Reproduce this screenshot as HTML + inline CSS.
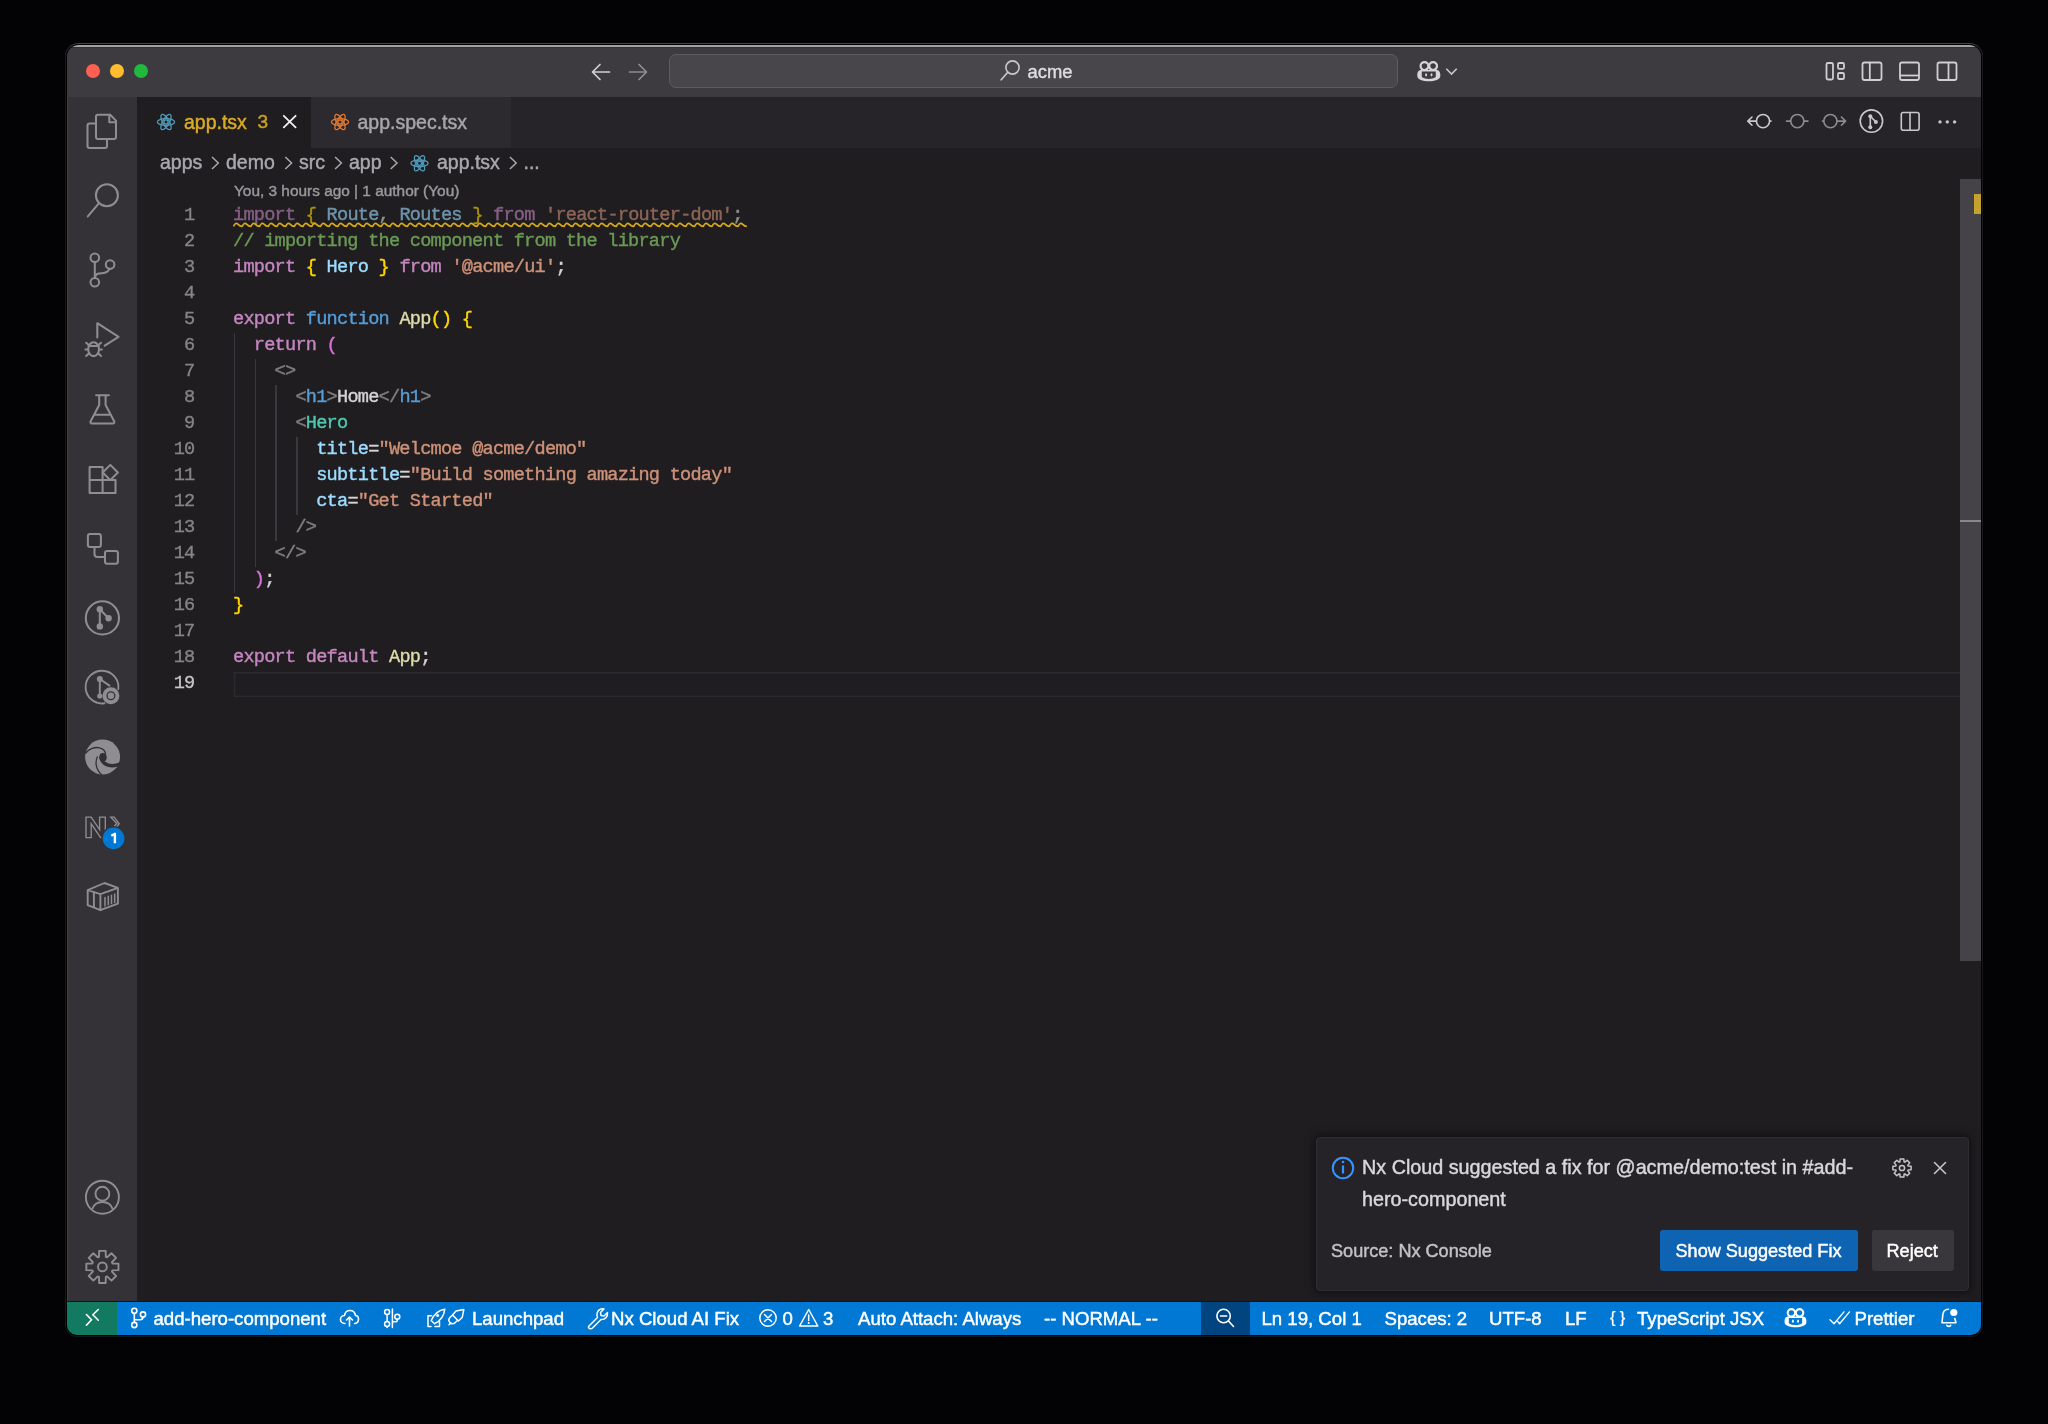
<!DOCTYPE html>
<html><head><meta charset="utf-8">
<style>
*{margin:0;padding:0;box-sizing:border-box}
html,body{width:2048px;height:1424px;overflow:hidden;background:#030205}
body{position:relative;font-family:"Liberation Sans",sans-serif}
.abs{position:absolute}
.t{position:absolute;white-space:pre;-webkit-text-stroke:0.45px currentColor}
#w1{position:absolute;left:65px;top:43px;width:1918px;height:1294px;border-radius:14px 14px 12px 12px;background:#18171a;border-top:1px solid #464448}
#w2{position:absolute;left:66px;top:44px;width:1916px;height:1292px;border-radius:13px 13px 11px 11px;background:#000}
#frame{position:absolute;left:67px;top:45px;width:1914px;height:1290px;border-radius:12px 12px 10px 10px;overflow:hidden;background:#1f1d20}
#c{position:absolute;left:-67px;top:-45px;width:2048px;height:1424px;will-change:transform}
.code{position:absolute;font-family:"Liberation Mono",monospace;font-size:18.6px;letter-spacing:-0.762px;line-height:26px;white-space:pre;color:#d4d4d4;-webkit-text-stroke:0.4px currentColor}
.ln{position:absolute;font-family:"Liberation Mono",monospace;font-size:18.6px;letter-spacing:-0.762px;line-height:26px;color:#868488;text-align:right;width:60px;-webkit-text-stroke:0.35px currentColor}
</style></head><body>
<div id="w1"></div><div id="w2"></div>
<div id="frame"><div id="c">
<div class="abs" style="left:67px;top:45px;width:1914px;height:52px;background:#3d3b3f;border-top:2px solid #a3a1a4"></div>
<div class="abs" style="left:67px;top:47px;width:1914px;height:1px;background:#323034"></div>
<div class="abs" style="left:67px;top:97px;width:70px;height:1205px;background:#343236;border-left:1px solid #444246"></div>
<div class="abs" style="left:137px;top:97px;width:1844px;height:51px;background:#262428"></div>
<div class="abs" style="left:137px;top:97px;width:174px;height:51px;background:#1f1d20"></div>
<div class="abs" style="left:311px;top:97px;width:200px;height:51px;background:#2c2a2e"></div>
<div class="abs" style="left:137px;top:148px;width:1844px;height:1154px;background:#1f1d20"></div>
<div class="abs" style="left:67px;top:1301px;width:1914px;height:1px;background:#1a1214"></div>
<div class="abs" style="left:67px;top:1302px;width:1914px;height:33px;background:#0078d4"></div>
<div class="abs" style="left:669px;top:54px;width:729px;height:34px;border-radius:7px;background:#48464a;border:1.2px solid #5d5b5f"></div><div class="t" style="left:1027.50px;top:61.08px;font-size:18.4px;line-height:22.08px;color:#dddcdf;font-family:'Liberation Sans';font-weight:normal;letter-spacing:0px;">acme</div><div class="t" style="left:184.00px;top:110.94px;font-size:19.5px;line-height:23.40px;color:#d9ab27;font-family:'Liberation Sans';font-weight:normal;letter-spacing:0px;">app.tsx</div><div class="t" style="left:257.50px;top:111.02px;font-size:19px;line-height:22.80px;color:#c9a01f;font-family:'Liberation Sans';font-weight:normal;letter-spacing:0px;">3</div><div class="t" style="left:357.50px;top:110.94px;font-size:19.5px;line-height:23.40px;color:#a8a6aa;font-family:'Liberation Sans';font-weight:normal;letter-spacing:0px;">app.spec.tsx</div><div class="t" style="left:160.00px;top:151.14px;font-size:19.5px;line-height:23.40px;color:#aaa8ac;font-family:'Liberation Sans';font-weight:normal;letter-spacing:0px;">apps</div><div class="t" style="left:226.00px;top:151.14px;font-size:19.5px;line-height:23.40px;color:#aaa8ac;font-family:'Liberation Sans';font-weight:normal;letter-spacing:0px;">demo</div><div class="t" style="left:299.00px;top:151.14px;font-size:19.5px;line-height:23.40px;color:#aaa8ac;font-family:'Liberation Sans';font-weight:normal;letter-spacing:0px;">src</div><div class="t" style="left:349.00px;top:151.14px;font-size:19.5px;line-height:23.40px;color:#aaa8ac;font-family:'Liberation Sans';font-weight:normal;letter-spacing:0px;">app</div><div class="t" style="left:437.00px;top:151.14px;font-size:19.5px;line-height:23.40px;color:#aaa8ac;font-family:'Liberation Sans';font-weight:normal;letter-spacing:0px;">app.tsx</div><div class="t" style="left:523.50px;top:151.14px;font-size:19.5px;line-height:23.40px;color:#aaa8ac;font-family:'Liberation Sans';font-weight:normal;letter-spacing:0px;">...</div><div class="t" style="left:234.00px;top:182.02px;font-size:15.4px;line-height:18.48px;color:#99979b;font-family:'Liberation Sans';font-weight:normal;letter-spacing:0px;">You, 3 hours ago | 1 author (You)</div><div class="ln" style="left:134.5px;top:203.34px;color:#858585">1</div><div class="code" style="left:233.0px;top:203.34px;opacity:0.62"><span style="color:#c586c0">import</span><span style="color:#d4d4d4"> </span><span style="color:#ffd700">{</span><span style="color:#d4d4d4"> </span><span style="color:#9cdcfe">Route</span><span style="color:#d4d4d4">, </span><span style="color:#9cdcfe">Routes</span><span style="color:#d4d4d4"> </span><span style="color:#ffd700">}</span><span style="color:#d4d4d4"> </span><span style="color:#c586c0">from</span><span style="color:#d4d4d4"> </span><span style="color:#ce9178">&#x27;react-router-dom&#x27;</span><span style="color:#d4d4d4">;</span></div><div class="ln" style="left:134.5px;top:229.34px;color:#858585">2</div><div class="code" style="left:233.0px;top:229.34px"><span style="color:#6a9955">// importing the component from the library</span></div><div class="ln" style="left:134.5px;top:255.34px;color:#858585">3</div><div class="code" style="left:233.0px;top:255.34px"><span style="color:#c586c0">import</span><span style="color:#d4d4d4"> </span><span style="color:#ffd700">{</span><span style="color:#d4d4d4"> </span><span style="color:#9cdcfe">Hero</span><span style="color:#d4d4d4"> </span><span style="color:#ffd700">}</span><span style="color:#d4d4d4"> </span><span style="color:#c586c0">from</span><span style="color:#d4d4d4"> </span><span style="color:#ce9178">&#x27;@acme/ui&#x27;</span><span style="color:#d4d4d4">;</span></div><div class="ln" style="left:134.5px;top:281.34px;color:#858585">4</div><div class="ln" style="left:134.5px;top:307.34px;color:#858585">5</div><div class="code" style="left:233.0px;top:307.34px"><span style="color:#c586c0">export</span><span style="color:#d4d4d4"> </span><span style="color:#569cd6">function</span><span style="color:#d4d4d4"> </span><span style="color:#dcdcaa">App</span><span style="color:#ffd700">()</span><span style="color:#d4d4d4"> </span><span style="color:#ffd700">{</span></div><div class="ln" style="left:134.5px;top:333.34px;color:#858585">6</div><div class="code" style="left:233.0px;top:333.34px"><span style="color:#d4d4d4">  </span><span style="color:#c586c0">return</span><span style="color:#d4d4d4"> </span><span style="color:#da70d6">(</span></div><div class="ln" style="left:134.5px;top:359.34px;color:#858585">7</div><div class="code" style="left:233.0px;top:359.34px"><span style="color:#d4d4d4">    </span><span style="color:#808080">&lt;&gt;</span></div><div class="ln" style="left:134.5px;top:385.34px;color:#858585">8</div><div class="code" style="left:233.0px;top:385.34px"><span style="color:#d4d4d4">      </span><span style="color:#808080">&lt;</span><span style="color:#569cd6">h1</span><span style="color:#808080">&gt;</span><span style="color:#d4d4d4">Home</span><span style="color:#808080">&lt;/</span><span style="color:#569cd6">h1</span><span style="color:#808080">&gt;</span></div><div class="ln" style="left:134.5px;top:411.34px;color:#858585">9</div><div class="code" style="left:233.0px;top:411.34px"><span style="color:#d4d4d4">      </span><span style="color:#808080">&lt;</span><span style="color:#4ec9b0">Hero</span></div><div class="ln" style="left:134.5px;top:437.34px;color:#858585">10</div><div class="code" style="left:233.0px;top:437.34px"><span style="color:#d4d4d4">        </span><span style="color:#9cdcfe">title</span><span style="color:#d4d4d4">=</span><span style="color:#ce9178">&quot;Welcmoe @acme/demo&quot;</span></div><div class="ln" style="left:134.5px;top:463.34px;color:#858585">11</div><div class="code" style="left:233.0px;top:463.34px"><span style="color:#d4d4d4">        </span><span style="color:#9cdcfe">subtitle</span><span style="color:#d4d4d4">=</span><span style="color:#ce9178">&quot;Build something amazing today&quot;</span></div><div class="ln" style="left:134.5px;top:489.34px;color:#858585">12</div><div class="code" style="left:233.0px;top:489.34px"><span style="color:#d4d4d4">        </span><span style="color:#9cdcfe">cta</span><span style="color:#d4d4d4">=</span><span style="color:#ce9178">&quot;Get Started&quot;</span></div><div class="ln" style="left:134.5px;top:515.34px;color:#858585">13</div><div class="code" style="left:233.0px;top:515.34px"><span style="color:#d4d4d4">      </span><span style="color:#808080">/&gt;</span></div><div class="ln" style="left:134.5px;top:541.34px;color:#858585">14</div><div class="code" style="left:233.0px;top:541.34px"><span style="color:#d4d4d4">    </span><span style="color:#808080">&lt;/&gt;</span></div><div class="ln" style="left:134.5px;top:567.34px;color:#858585">15</div><div class="code" style="left:233.0px;top:567.34px"><span style="color:#d4d4d4">  </span><span style="color:#da70d6">)</span><span style="color:#d4d4d4">;</span></div><div class="ln" style="left:134.5px;top:593.34px;color:#858585">16</div><div class="code" style="left:233.0px;top:593.34px"><span style="color:#ffd700">}</span></div><div class="ln" style="left:134.5px;top:619.34px;color:#858585">17</div><div class="ln" style="left:134.5px;top:645.34px;color:#858585">18</div><div class="code" style="left:233.0px;top:645.34px"><span style="color:#c586c0">export</span><span style="color:#d4d4d4"> </span><span style="color:#c586c0">default</span><span style="color:#d4d4d4"> </span><span style="color:#dcdcaa">App</span><span style="color:#d4d4d4">;</span></div><div class="ln" style="left:134.5px;top:671.34px;color:#c6c6c6">19</div><div class="abs" style="left:233.8px;top:333.3px;width:1.5px;height:260.0px;background:#3a383c"></div><div class="abs" style="left:254.6px;top:359.3px;width:1.5px;height:208.0px;background:#3a383c"></div><div class="abs" style="left:275.4px;top:385.3px;width:1.5px;height:156.0px;background:#3a383c"></div><div class="abs" style="left:296.2px;top:437.3px;width:1.5px;height:78.0px;background:#3a383c"></div><div class="abs" style="left:1960px;top:179px;width:21px;height:782px;background:#454347"></div><div class="abs" style="left:1960px;top:520px;width:21px;height:2px;background:#8a888c"></div><div class="abs" style="left:1974px;top:194px;width:7px;height:20px;background:#c4a22e"></div><div class="abs" style="left:1316px;top:1137px;width:653px;height:154px;background:#252327;border-radius:4px;box-shadow:0 0 8px 2px rgba(0,0,0,0.5);border:1px solid #2f2d31"></div><div class="t" style="left:1362.00px;top:1156.31px;font-size:19.75px;line-height:23.70px;color:#d8d7da;font-family:'Liberation Sans';font-weight:normal;letter-spacing:0px;">Nx Cloud suggested a fix for @acme/demo:test in #add-</div><div class="t" style="left:1362.00px;top:1187.81px;font-size:19.75px;line-height:23.70px;color:#d8d7da;font-family:'Liberation Sans';font-weight:normal;letter-spacing:0px;">hero-component</div><div class="t" style="left:1331.00px;top:1240.57px;font-size:18.1px;line-height:21.72px;color:#c2c1c4;font-family:'Liberation Sans';font-weight:normal;letter-spacing:0px;">Source: Nx Console</div><div class="abs" style="left:1660px;top:1230px;width:198px;height:41px;background:#0e63b3;border-radius:3px"></div><div class="t" style="left:1675.50px;top:1240.57px;font-size:18.1px;line-height:21.72px;color:#ffffff;font-family:'Liberation Sans';font-weight:normal;letter-spacing:0px;">Show Suggested Fix</div><div class="abs" style="left:1872px;top:1230px;width:82px;height:41px;background:#39373b;border-radius:3px"></div><div class="t" style="left:1886.50px;top:1240.57px;font-size:18.1px;line-height:21.72px;color:#ffffff;font-family:'Liberation Sans';font-weight:normal;letter-spacing:0px;">Reject</div><div class="abs" style="left:67px;top:1302px;width:49.5px;height:33px;background:#117a60"></div><div class="abs" style="left:1201px;top:1302px;width:49px;height:33px;background:#00457f"></div><div class="t" style="left:153.50px;top:1308.20px;font-size:18.6px;line-height:22.32px;color:#ffffff;font-family:'Liberation Sans';font-weight:normal;letter-spacing:0px;">add-hero-component</div><div class="t" style="left:472.00px;top:1308.20px;font-size:18.6px;line-height:22.32px;color:#ffffff;font-family:'Liberation Sans';font-weight:normal;letter-spacing:0px;">Launchpad</div><div class="t" style="left:611.00px;top:1308.20px;font-size:18.6px;line-height:22.32px;color:#ffffff;font-family:'Liberation Sans';font-weight:normal;letter-spacing:0px;">Nx Cloud AI Fix</div><div class="t" style="left:782.50px;top:1308.20px;font-size:18.6px;line-height:22.32px;color:#ffffff;font-family:'Liberation Sans';font-weight:normal;letter-spacing:0px;">0</div><div class="t" style="left:823.00px;top:1308.20px;font-size:18.6px;line-height:22.32px;color:#ffffff;font-family:'Liberation Sans';font-weight:normal;letter-spacing:0px;">3</div><div class="t" style="left:858.00px;top:1308.20px;font-size:18.6px;line-height:22.32px;color:#ffffff;font-family:'Liberation Sans';font-weight:normal;letter-spacing:0px;">Auto Attach: Always</div><div class="t" style="left:1044.00px;top:1308.20px;font-size:18.6px;line-height:22.32px;color:#ffffff;font-family:'Liberation Sans';font-weight:normal;letter-spacing:0px;">-- NORMAL --</div><div class="t" style="left:1261.50px;top:1308.20px;font-size:18.6px;line-height:22.32px;color:#ffffff;font-family:'Liberation Sans';font-weight:normal;letter-spacing:0px;">Ln 19, Col 1</div><div class="t" style="left:1384.50px;top:1308.20px;font-size:18.6px;line-height:22.32px;color:#ffffff;font-family:'Liberation Sans';font-weight:normal;letter-spacing:0px;">Spaces: 2</div><div class="t" style="left:1489.00px;top:1308.20px;font-size:18.6px;line-height:22.32px;color:#ffffff;font-family:'Liberation Sans';font-weight:normal;letter-spacing:0px;">UTF-8</div><div class="t" style="left:1565.00px;top:1308.20px;font-size:18.6px;line-height:22.32px;color:#ffffff;font-family:'Liberation Sans';font-weight:normal;letter-spacing:0px;">LF</div><div class="t" style="left:1610.00px;top:1308.18px;font-size:16.5px;line-height:19.80px;color:#ffffff;font-family:'Liberation Sans';font-weight:normal;letter-spacing:0px;-webkit-text-stroke:0.2px #fff">{</div><div class="t" style="left:1619.80px;top:1308.18px;font-size:16.5px;line-height:19.80px;color:#ffffff;font-family:'Liberation Sans';font-weight:normal;letter-spacing:0px;-webkit-text-stroke:0.2px #fff">}</div><div class="t" style="left:1637.00px;top:1308.20px;font-size:18.6px;line-height:22.32px;color:#ffffff;font-family:'Liberation Sans';font-weight:normal;letter-spacing:0px;">TypeScript JSX</div><div class="t" style="left:1854.50px;top:1308.20px;font-size:18.6px;line-height:22.32px;color:#ffffff;font-family:'Liberation Sans';font-weight:normal;letter-spacing:0px;">Prettier</div>
<svg class="abs" style="left:0;top:0" width="2048" height="1424" viewBox="0 0 2048 1424"><circle cx="93" cy="71" r="7" fill="#ff5f52"/><circle cx="117" cy="71" r="7" fill="#febc2e"/><circle cx="141" cy="71" r="7" fill="#21b83d"/><path d="M609.5 72 H593 M600 64.5 L592.5 72 L600 79.5" stroke="#d0cfd2" stroke-width="1.7" fill="none" stroke-linecap="round" stroke-linejoin="round"/><path d="M629.5 72 H646 M639 64.5 L646.5 72 L639 79.5" stroke="#8e8c90" stroke-width="1.7" fill="none" stroke-linecap="round" stroke-linejoin="round"/><circle cx="1012.5" cy="67.5" r="6.6" stroke="#c9c8cb" stroke-width="1.6" fill="none"/><path d="M1007.8 72.3 L1001.2 79.8" stroke="#c9c8cb" stroke-width="1.7" stroke-linecap="round"/><g transform="translate(1428.8,71.5) scale(1.0)"><circle cx="-4.3" cy="-5.4" r="3.9" fill="none" stroke="#d5d4d7" stroke-width="2.2"/><circle cx="4.3" cy="-5.4" r="3.9" fill="none" stroke="#d5d4d7" stroke-width="2.2"/><path fill-rule="evenodd" fill="#d5d4d7" d="M-11.5 3.5 C-11.5 -0.5 -9.5 -1.5 -7.5 -1.5 H7.5 C9.5 -1.5 11.5 -0.5 11.5 3.5 V4.5 C11.5 8 6 9.8 0 9.8 C-6 9.8 -11.5 8 -11.5 4.5 Z M-7 0 H7 V5.5 C4.5 7.2 2.5 7.4 0 7.4 C-2.5 7.4 -4.5 7.2 -7 5.5 Z"/><ellipse cx="-2.7" cy="3.3" rx="1" ry="1.6" fill="#d5d4d7"/><ellipse cx="2.7" cy="3.3" rx="1" ry="1.6" fill="#d5d4d7"/></g><path d="M1446.3 68.7 L1451.5 74 L1456.7 68.7" stroke="#c8c7ca" stroke-width="1.6" fill="none"/><g fill="none" stroke="#cfced1" stroke-width="1.8"><rect x="1826.5" y="63" width="6.5" height="16.5" rx="1.5"/><rect x="1838" y="63" width="6" height="5.8" rx="1.3"/><rect x="1838" y="73" width="6" height="6" rx="1.3"/><rect x="1862.5" y="62.5" width="19" height="17.5" rx="2"/><path d="M1869.8 62.5 V80"/><rect x="1900" y="62.5" width="19" height="17.5" rx="2"/><path d="M1900 75.5 H1919"/><rect x="1937.5" y="62.5" width="19" height="17.5" rx="2"/><path d="M1948.5 62.5 V80"/></g><g fill="none" stroke="#8f8d91" stroke-width="2.05" stroke-linejoin="round" stroke-linecap="round"><path d="M98 114.8 H110.2 L116 120.6 V136.9 Q116 138.9 114 138.9 H98 Q96 138.9 96 136.9 V116.8 Q96 114.8 98 114.8 Z"/><path d="M109.3 114.8 V122.3 H116"/><path d="M96 123.5 H89.5 Q87.5 123.5 87.5 125.5 V146 Q87.5 148 89.5 148 H105 Q107 148 107 146 V138.9"/><circle cx="106.9" cy="195.2" r="11"/><path d="M98.6 203.6 L87.8 216.4"/><circle cx="94.8" cy="257.8" r="4.3"/><circle cx="94.8" cy="282.2" r="4.3"/><circle cx="110.1" cy="264.6" r="4.3"/><path d="M94.8 262.1 V277.9"/><path d="M95 277 C95.5 273.8 98 273.4 102 273.2 C106 273 108.5 271.5 109.3 268.8"/><path d="M97.3 337.5 V323.2 L118.6 336.8 L104.7 345.7"/><ellipse cx="93.6" cy="349.2" rx="5.4" ry="6.9"/><path d="M88.6 346 H98.6"/><path d="M86.2 342.8 L89.3 345.6 M85.5 349.4 H88.2 M86.2 356 L89.3 353.1 M101 342.8 L97.9 345.6 M101.8 349.4 H99 M101 356 L97.9 353.1"/><path d="M96.1 395.2 H108.9 M99.2 395.5 V405 L90.5 421.5 Q90 423.5 92 423.5 H112.8 Q114.8 423.5 114.3 421.5 L105.6 405 V395.5 M94.5 414.8 H110.2"/><path d="M89.6 466.9 H102.6 V493 M89.6 466.9 V493 H115.5 V480 H89.6"/><path d="M110.3 464.9 L117.9 472.5 L110.3 480.1 L102.7 472.5 Z"/><rect x="87.9" y="533.9" width="13" height="13.1" rx="2.2"/><rect x="105" y="550.9" width="12.9" height="12.8" rx="2.2"/><path d="M94.5 547 V554 Q94.5 557 97.5 557 H105"/><circle cx="102.4" cy="617.9" r="16.6"/><path d="M99.8 609.3 V626.4 M99.8 609.3 L108.6 618.2"/></g><g fill="#8f8d91"><circle cx="99.8" cy="609.3" r="3.2"/><circle cx="108.6" cy="618.2" r="3.2"/><circle cx="99.8" cy="626.4" r="3.2"/></g><g fill="none" stroke="#8f8d91" stroke-width="1.9" stroke-linecap="round"><path d="M104.5 703.3 A16.4 16.4 0 1 1 118.3 689"/><path d="M99.8 679 V695 M99.8 679 L109.4 685.6"/><circle cx="110.9" cy="695.7" r="6.5" stroke-width="4"/></g><g fill="#8f8d91"><circle cx="99.8" cy="678.9" r="3"/><circle cx="99.8" cy="696" r="2.6"/><circle cx="110.9" cy="695.7" r="3.2"/></g><g><circle cx="102.6" cy="757" r="17.5" fill="#8f8d91"/><path d="M85.3 753.5 C89 748.5 95 746.8 99.5 747.8 C103 748.6 105.2 750.8 105.6 753.8" stroke="#323034" stroke-width="1.3" fill="none"/><path d="M97.5 756.5 C95 761.5 95.3 769 101.8 775" stroke="#323034" stroke-width="1.3" fill="none"/><ellipse cx="103" cy="757.2" rx="3.7" ry="4.3" fill="#323034"/><path d="M99.5 757 C99.8 763.5 105 767.2 112 767.4 C115 767.5 118.3 766.6 120.6 764.8 L120.2 762 C117.5 763.3 114.8 763.9 112.2 763.9 C107.2 763.8 103.5 761.5 102.6 757 Z" fill="#323034"/></g><g fill="none" stroke="#8f8d91" stroke-width="1.35" stroke-linejoin="miter"><path d="M86 817.1 H91.2 L99.6 829.6 V817.1 H105.3 V837.6 H100.6 L91.2 823.8 V837.6 H86 Z"/><path d="M110.8 817.1 H114.2 L119.2 823.8 L116.2 827.5 L114.5 826 L116.8 823.5 Z"/></g><circle cx="113.6" cy="838.4" r="12.3" fill="#343236"/><circle cx="113.6" cy="838.4" r="10.8" fill="#0078d4"/><path d="M111.3 835.8 L114.9 833.8 V843.2" stroke="#fff" stroke-width="2.4" fill="none" stroke-linejoin="round"/><g fill="none" stroke="#8f8d91" stroke-width="1.9" stroke-linejoin="round"><path d="M87.7 890.1 L104.4 883 L117.9 887.9 L100.4 894.1 Z M87.7 890.1 V905.2 L100.4 910.2 L117.9 903.7 V887.9 M100.4 894.1 V910.2 M93.9 892.5 V907.2"/><path d="M105 897 V906.5 M108.3 895.8 V905.3 M111.5 894.7 V904.2 M114.7 893.5 V903" stroke-width="1.5"/></g><g fill="none" stroke="#8f8d91" stroke-width="1.9"><circle cx="102.4" cy="1197.2" r="16.5"/><circle cx="102.4" cy="1193.7" r="6.9"/><path d="M92.2 1209 C94 1204 98 1202 102.4 1202 C107 1202 111 1204 112.6 1209"/></g><path d="M98.97 1256.87 L99.14 1250.83 L105.66 1250.83 L105.83 1256.87 L107.06 1257.38 L111.46 1253.23 L116.07 1257.84 L111.92 1262.24 L112.43 1263.47 L118.47 1263.64 L118.47 1270.16 L112.43 1270.33 L111.92 1271.56 L116.07 1275.96 L111.46 1280.57 L107.06 1276.42 L105.83 1276.93 L105.66 1282.97 L99.14 1282.97 L98.97 1276.93 L97.74 1276.42 L93.34 1280.57 L88.73 1275.96 L92.88 1271.56 L92.37 1270.33 L86.33 1270.16 L86.33 1263.64 L92.37 1263.47 L92.88 1262.24 L88.73 1257.84 L93.34 1253.23 L97.74 1257.38 Z" fill="none" stroke="#8f8d91" stroke-width="1.9" stroke-linejoin="round"/><circle cx="102.4" cy="1266.9" r="4.4" fill="none" stroke="#8f8d91" stroke-width="1.9"/><g transform="translate(166,122) scale(1.0)" fill="none" stroke="#519aba" stroke-width="1.3"><ellipse rx="8.6" ry="3.3"/><ellipse rx="8.6" ry="3.3" transform="rotate(60)"/><ellipse rx="8.6" ry="3.3" transform="rotate(-60)"/><circle r="2.1" fill="none"/></g><g transform="translate(340,122) scale(1.0)" fill="none" stroke="#e37933" stroke-width="1.3"><ellipse rx="8.6" ry="3.3"/><ellipse rx="8.6" ry="3.3" transform="rotate(60)"/><ellipse rx="8.6" ry="3.3" transform="rotate(-60)"/><circle r="2.1" fill="none"/></g><path d="M283.8 115.8 L295.6 127.4 M295.6 115.8 L283.8 127.4" stroke="#f0f0f0" stroke-width="1.8" stroke-linecap="round"/><g fill="none" stroke-width="1.6" stroke-linecap="round" stroke-linejoin="round"><circle cx="1763" cy="121.1" r="6.6" stroke="#c8c7ca"/><path d="M1756.4 121.1 H1748 M1752 117 L1747.8 121.1 L1752 125.2" stroke="#c8c7ca"/><path d="M1769.6 121.1 H1771" stroke="#c8c7ca"/><circle cx="1797.3" cy="121.1" r="6.6" stroke="#8c8b8e"/><path d="M1786.5 121.1 H1790.7 M1803.9 121.1 H1808" stroke="#8c8b8e"/><circle cx="1830.4" cy="121.1" r="6.6" stroke="#8c8b8e"/><path d="M1822.5 121.1 H1823.8 M1837 121.1 H1845.5 M1841.4 117 L1845.6 121.1 L1841.4 125.2" stroke="#8c8b8e"/><circle cx="1871.4" cy="121.1" r="11.2" stroke="#c8c7ca"/><path d="M1870.3 116.3 V127.3 M1870.3 116.3 L1875.9 121.9" stroke="#c8c7ca"/><rect x="1901.3" y="112.5" width="17.8" height="17.8" rx="2" stroke="#c8c7ca"/><path d="M1910 112.5 V130.3" stroke="#c8c7ca"/></g><g fill="#c8c7ca"><circle cx="1870.3" cy="116.3" r="2"/><circle cx="1875.9" cy="121.9" r="2"/><circle cx="1870.3" cy="127.3" r="2"/><circle cx="1940" cy="121.9" r="1.7"/><circle cx="1947.3" cy="121.9" r="1.7"/><circle cx="1954.6" cy="121.9" r="1.7"/></g><path d="M212.0 157 L218.3 163 L212.0 169" stroke="#aaa8ac" stroke-width="1.5" fill="none"/><path d="M285.3 157 L291.6 163 L285.3 169" stroke="#aaa8ac" stroke-width="1.5" fill="none"/><path d="M335.1 157 L341.40000000000003 163 L335.1 169" stroke="#aaa8ac" stroke-width="1.5" fill="none"/><path d="M390.7 157 L397.0 163 L390.7 169" stroke="#aaa8ac" stroke-width="1.5" fill="none"/><path d="M509.9 157 L516.1999999999999 163 L509.9 169" stroke="#aaa8ac" stroke-width="1.5" fill="none"/><g transform="translate(419.5,163.3) scale(1.0)" fill="none" stroke="#519aba" stroke-width="1.3"><ellipse rx="8.6" ry="3.3"/><ellipse rx="8.6" ry="3.3" transform="rotate(60)"/><ellipse rx="8.6" ry="3.3" transform="rotate(-60)"/><circle r="2.1" fill="none"/></g><path d="M233.5 226.3 Q235.68 221.8 237.85 224.05 Q240.03 226.3 242.20 226.3 Q244.38 221.8 246.55 224.05 Q248.72 226.3 250.90 226.3 Q253.07 221.8 255.25 224.05 Q257.42 226.3 259.60 226.3 Q261.77 221.8 263.95 224.05 Q266.12 226.3 268.30 226.3 Q270.47 221.8 272.65 224.05 Q274.82 226.3 277.00 226.3 Q279.17 221.8 281.35 224.05 Q283.52 226.3 285.70 226.3 Q287.87 221.8 290.05 224.05 Q292.22 226.3 294.40 226.3 Q296.57 221.8 298.75 224.05 Q300.92 226.3 303.10 226.3 Q305.27 221.8 307.45 224.05 Q309.62 226.3 311.80 226.3 Q313.97 221.8 316.15 224.05 Q318.32 226.3 320.50 226.3 Q322.67 221.8 324.85 224.05 Q327.02 226.3 329.20 226.3 Q331.37 221.8 333.55 224.05 Q335.72 226.3 337.90 226.3 Q340.07 221.8 342.25 224.05 Q344.42 226.3 346.60 226.3 Q348.77 221.8 350.95 224.05 Q353.12 226.3 355.30 226.3 Q357.47 221.8 359.65 224.05 Q361.82 226.3 364.00 226.3 Q366.17 221.8 368.35 224.05 Q370.52 226.3 372.70 226.3 Q374.87 221.8 377.05 224.05 Q379.22 226.3 381.40 226.3 Q383.57 221.8 385.75 224.05 Q387.92 226.3 390.10 226.3 Q392.27 221.8 394.45 224.05 Q396.62 226.3 398.80 226.3 Q400.97 221.8 403.15 224.05 Q405.32 226.3 407.50 226.3 Q409.67 221.8 411.85 224.05 Q414.02 226.3 416.20 226.3 Q418.37 221.8 420.55 224.05 Q422.72 226.3 424.90 226.3 Q427.07 221.8 429.25 224.05 Q431.42 226.3 433.60 226.3 Q435.77 221.8 437.95 224.05 Q440.12 226.3 442.30 226.3 Q444.47 221.8 446.65 224.05 Q448.82 226.3 451.00 226.3 Q453.17 221.8 455.35 224.05 Q457.52 226.3 459.70 226.3 Q461.87 221.8 464.05 224.05 Q466.22 226.3 468.40 226.3 Q470.57 221.8 472.75 224.05 Q474.92 226.3 477.10 226.3 Q479.27 221.8 481.45 224.05 Q483.62 226.3 485.80 226.3 Q487.97 221.8 490.15 224.05 Q492.32 226.3 494.50 226.3 Q496.67 221.8 498.85 224.05 Q501.02 226.3 503.20 226.3 Q505.37 221.8 507.55 224.05 Q509.72 226.3 511.90 226.3 Q514.07 221.8 516.25 224.05 Q518.42 226.3 520.60 226.3 Q522.77 221.8 524.95 224.05 Q527.12 226.3 529.30 226.3 Q531.47 221.8 533.65 224.05 Q535.82 226.3 538.00 226.3 Q540.17 221.8 542.35 224.05 Q544.52 226.3 546.70 226.3 Q548.87 221.8 551.05 224.05 Q553.22 226.3 555.40 226.3 Q557.57 221.8 559.75 224.05 Q561.92 226.3 564.10 226.3 Q566.27 221.8 568.45 224.05 Q570.62 226.3 572.80 226.3 Q574.97 221.8 577.15 224.05 Q579.32 226.3 581.50 226.3 Q583.67 221.8 585.85 224.05 Q588.02 226.3 590.20 226.3 Q592.38 221.8 594.55 224.05 Q596.73 226.3 598.90 226.3 Q601.08 221.8 603.25 224.05 Q605.43 226.3 607.60 226.3 Q609.78 221.8 611.95 224.05 Q614.13 226.3 616.30 226.3 Q618.48 221.8 620.65 224.05 Q622.83 226.3 625.00 226.3 Q627.18 221.8 629.35 224.05 Q631.53 226.3 633.70 226.3 Q635.88 221.8 638.05 224.05 Q640.23 226.3 642.40 226.3 Q644.58 221.8 646.75 224.05 Q648.93 226.3 651.10 226.3 Q653.28 221.8 655.45 224.05 Q657.63 226.3 659.80 226.3 Q661.98 221.8 664.15 224.05 Q666.33 226.3 668.50 226.3 Q670.68 221.8 672.85 224.05 Q675.03 226.3 677.20 226.3 Q679.38 221.8 681.55 224.05 Q683.73 226.3 685.90 226.3 Q688.08 221.8 690.25 224.05 Q692.43 226.3 694.60 226.3 Q696.78 221.8 698.95 224.05 Q701.13 226.3 703.30 226.3 Q705.48 221.8 707.65 224.05 Q709.83 226.3 712.00 226.3 Q714.18 221.8 716.35 224.05 Q718.53 226.3 720.70 226.3 Q722.88 221.8 725.05 224.05 Q727.23 226.3 729.40 226.3 Q731.58 221.8 733.75 224.05 Q735.93 226.3 738.10 226.3 Q740.28 221.8 742.45 224.05 Q744.63 226.3 746.80 226.3" stroke="#d6a915" stroke-width="1.7" fill="none" stroke-linejoin="round"/><path d="M1960 672.8 H234.5 V696.3 H1960" fill="none" stroke="#2b292d" stroke-width="1.6"/><circle cx="1343" cy="1168" r="10.2" stroke="#3794ff" stroke-width="2" fill="none"/><path d="M1343 1165.5 V1173.5" stroke="#3794ff" stroke-width="2.2"/><circle cx="1343" cy="1162" r="1.3" fill="#3794ff"/><path d="M1908.15 1165.89 L1911.11 1166.15 L1911.11 1169.85 L1908.15 1170.11 L1907.84 1170.86 L1909.75 1173.14 L1907.14 1175.75 L1904.86 1173.84 L1904.11 1174.15 L1903.85 1177.11 L1900.15 1177.11 L1899.89 1174.15 L1899.14 1173.84 L1896.86 1175.75 L1894.25 1173.14 L1896.16 1170.86 L1895.85 1170.11 L1892.89 1169.85 L1892.89 1166.15 L1895.85 1165.89 L1896.16 1165.14 L1894.25 1162.86 L1896.86 1160.25 L1899.14 1162.16 L1899.89 1161.85 L1900.15 1158.89 L1903.85 1158.89 L1904.11 1161.85 L1904.86 1162.16 L1907.14 1160.25 L1909.75 1162.86 L1907.84 1165.14 Z" fill="none" stroke="#c5c4c7" stroke-width="1.5" stroke-linejoin="round"/><circle cx="1902" cy="1168" r="2.6" fill="none" stroke="#c5c4c7" stroke-width="1.5"/><path d="M1934.5 1162.5 L1945.5 1173.5 M1945.5 1162.5 L1934.5 1173.5" stroke="#c5c4c7" stroke-width="1.6" stroke-linecap="round"/><path d="M86.4 1314.5 L91.5 1319.8 L86.4 1325.2 M98.3 1309.5 L92.9 1314.8 L98.3 1320.2" stroke="#ffffff" stroke-width="1.6" fill="none" stroke-linecap="round" stroke-linejoin="miter"/><g fill="none" stroke="#ffffff" stroke-width="1.6"><circle cx="134.3" cy="1310.8" r="2.6"/><circle cx="134.3" cy="1325" r="2.6"/><circle cx="143" cy="1314.5" r="2.6"/><path d="M134.3 1313.4 V1322.4 M134.3 1319.8 H140 C141.8 1319.8 143 1318.8 143 1317.1"/></g><g fill="none" stroke="#ffffff" stroke-width="1.6" stroke-linecap="round" stroke-linejoin="round"><path d="M345 1323.5 C341.5 1323.5 340.5 1321 340.5 1319.5 C340.5 1317 342.5 1315.5 344.5 1315.5 C345 1312 347.5 1310.5 350 1310.5 C353 1310.5 355 1312.5 355.5 1315.5 C357.5 1315.5 358.5 1317.5 358.5 1319.3 C358.5 1321.5 357 1323.5 354.5 1323.5"/><path d="M349.5 1326 V1317.5 M346.5 1320 L349.5 1317 L352.5 1320"/></g><g fill="none" stroke="#ffffff" stroke-width="1.5" stroke-linecap="round"><circle cx="387.1" cy="1311.9" r="2.5"/><circle cx="387.1" cy="1324.1" r="2.5"/><circle cx="397.3" cy="1316.8" r="2.5"/><path d="M387.1 1314.4 V1321.6 M387.1 1326.6 V1327.5 M392.4 1309 V1327.5 M397.3 1319.3 V1320 C397.3 1321.2 396.5 1321.8 395.3 1321.8 H392.4"/></g><g fill="none" stroke="#ffffff" stroke-width="1.5" stroke-linecap="round" stroke-linejoin="round"><path d="M444.8 1309.2 C438.5 1310 434 1314.5 431.2 1320.5 L434.5 1323.8 C440.5 1321 444 1316.5 444.8 1309.2 Z"/><path d="M431.5 1315.8 H428 V1326.5 H431 M439.5 1321.5 V1326.5 H435"/><path d="M449 1324.8 L451 1322.8 M456 1311 L463.8 1309.5 L462.3 1317.2 L458.5 1321 L452.5 1315 Z M452.5 1315 L450.2 1317.3 C448.5 1319 448.5 1321 450 1322.7 C451.6 1324.3 453.6 1324.2 455.3 1322.5 L457.6 1320.2"/></g><circle cx="437.6" cy="1315.6" r="1.5" fill="#ffffff"/><path d="M589 1326 L597.5 1317.5 C596 1314 597.5 1310 601 1309 C602 1308.7 603 1308.7 604 1309 L600.5 1312.5 L601 1315.5 L604 1316 L607.5 1312.5 C608 1316.5 605 1320 601 1319.5 L592.5 1328 C591.5 1329 589.5 1329 588.8 1328 C588 1327.2 588 1327 589 1326 Z" fill="none" stroke="#ffffff" stroke-width="1.5" stroke-linejoin="round"/><g fill="none" stroke="#ffffff" stroke-width="1.5" stroke-linecap="round"><circle cx="768" cy="1318" r="8.2"/><path d="M764.5 1314.5 L771.5 1321.5 M771.5 1314.5 L764.5 1321.5"/><path d="M808.7 1309.5 L817.8 1326 H799.6 Z" stroke-linejoin="round"/><path d="M808.7 1315 V1320.5"/></g><circle cx="808.7" cy="1323" r="1" fill="#fff"/><g fill="none" stroke="#ffffff" stroke-width="1.6" stroke-linecap="round"><circle cx="1223.6" cy="1316" r="6.7"/><path d="M1220.5 1316 H1226.7 M1228.5 1321 L1233.5 1326.5"/></g><g transform="translate(1795.5,1318) scale(0.95)"><circle cx="-4.3" cy="-5.4" r="3.9" fill="none" stroke="#ffffff" stroke-width="2.2"/><circle cx="4.3" cy="-5.4" r="3.9" fill="none" stroke="#ffffff" stroke-width="2.2"/><path fill-rule="evenodd" fill="#ffffff" d="M-11.5 3.5 C-11.5 -0.5 -9.5 -1.5 -7.5 -1.5 H7.5 C9.5 -1.5 11.5 -0.5 11.5 3.5 V4.5 C11.5 8 6 9.8 0 9.8 C-6 9.8 -11.5 8 -11.5 4.5 Z M-7 0 H7 V5.5 C4.5 7.2 2.5 7.4 0 7.4 C-2.5 7.4 -4.5 7.2 -7 5.5 Z"/><ellipse cx="-2.7" cy="3.3" rx="1" ry="1.6" fill="#ffffff"/><ellipse cx="2.7" cy="3.3" rx="1" ry="1.6" fill="#ffffff"/></g><path d="M1830 1319.8 L1834 1323.7 L1844 1311.9 M1837.8 1321.6 L1839.6 1323.7 L1849.5 1311.9" stroke="#ffffff" stroke-width="1.4" fill="none" stroke-linecap="round" stroke-linejoin="round"/><g fill="none" stroke="#ffffff" stroke-width="1.6" stroke-linejoin="round" stroke-linecap="round"><path d="M1948.5 1309.2 C1945 1309.3 1943 1311.5 1942.8 1315 L1942 1322.8 H1956 L1954.8 1318.5"/><path d="M1946.8 1325.2 C1947.3 1326.8 1950.2 1326.8 1950.7 1325.2"/></g><circle cx="1953.8" cy="1312.5" r="3.6" fill="#fff"/></svg>
</div></div>
</body></html>
